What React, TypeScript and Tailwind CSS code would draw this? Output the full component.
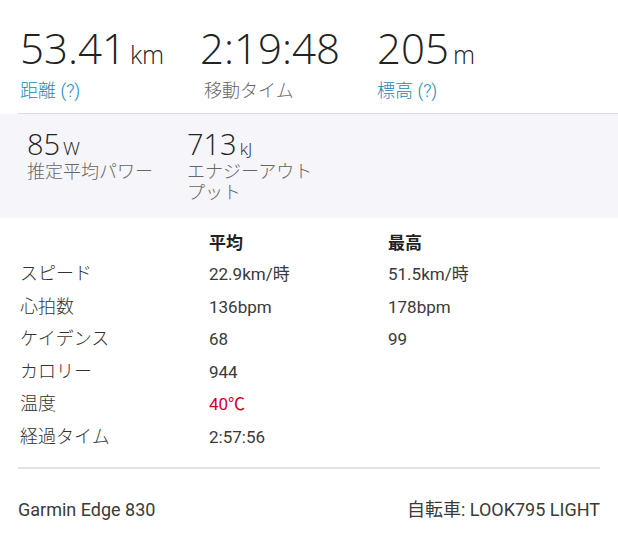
const FONT = { fontFamily: 'Roboto, "Noto Sans CJK JP", sans-serif' }
const NUM = { fontFamily: '"Open Sans", Roboto, sans-serif' }

const TOP = [
  { value: '53.41', unit: 'km', label: '距離 (?)', link: true },
  { value: '2:19:48', unit: '', label: '移動タイム', link: false },
  { value: '205', unit: 'm', label: '標高 (?)', link: true },
]

const ROWS = [
  { label: 'スピード', avg: '22.9km/時', max: '51.5km/時' },
  { label: '心拍数', avg: '136bpm', max: '178bpm' },
  { label: 'ケイデンス', avg: '68', max: '99' },
  { label: 'カロリー', avg: '944', max: '' },
  { label: '温度', avg: '40℃', max: '', hot: true },
  { label: '経過タイム', avg: '2:57:56', max: '' },
]

export default function App() {
  return (
    <div className="w-[618px] h-[536px] bg-white text-[#333]" style={FONT}>
      {/* main stats */}
      <div className="ml-[18px] flex border-b border-[#dcdce4] pt-[27px] pb-[9px]">
        {TOP.map((s, i) => (
          <div key={s.label} className={i === 0 ? 'w-[182px] pl-[2px]' : i === 1 ? 'w-[177px]' : ''}>
            <div className="flex items-baseline leading-none text-[#222]" style={NUM}>
              <span className="text-[42px] font-light">{s.value}</span>
              {s.unit && <span className="ml-[4px] text-[25px] font-light">{s.unit}</span>}
            </div>
            <div className={`mt-[8px] text-[18px] font-light ${s.link ? 'text-[#1b87b5]' : 'text-[#666]'} ${i === 1 ? 'pl-[4px]' : ''}`}>
              {s.label}
            </div>
          </div>
        ))}
      </div>

      {/* secondary stats */}
      <div className="flex h-[104px] bg-[#f6f6fa] pl-[27px] pt-[15px]">
        <div className="w-[160px]">
          <div className="flex items-baseline leading-none text-[#222]" style={NUM}>
            <span className="text-[29px] font-light">85</span>
            <span className="ml-[3px] text-[19px] font-light">W</span>
          </div>
          <div className="mt-[3px] text-[18px] font-light leading-[21px] text-[#666]">推定平均パワー</div>
        </div>
        <div className="w-[132px]">
          <div className="flex items-baseline leading-none text-[#222]" style={NUM}>
            <span className="text-[29px] font-light">713</span>
            <span className="ml-[3px] text-[17px] font-light">kJ</span>
          </div>
          <div className="mt-[3px] text-[18px] font-light leading-[21px] text-[#666]">エナジーアウトプット</div>
        </div>
      </div>

      {/* table */}
      <div className="mx-[18px] border-b-2 border-[#e2e2e6] pt-[12px] pb-[13px]">
        <div className="grid grid-cols-[189px_179px_1fr] pl-[2px] text-[17px] font-bold leading-[26px] text-[#222]">
          <span />
          <span>平均</span>
          <span>最高</span>
        </div>
        <div className="pt-[2px]">
          {ROWS.map((r) => (
            <div key={r.label} className="grid grid-cols-[189px_179px_1fr] pl-[2px] text-[17px] leading-[32.6px] text-[#3a3a3a]">
              <span className="text-[18px] font-light text-[#333]">{r.label}</span>
              <span className={r.hot ? 'text-[#d0021b]' : ''}>{r.avg}</span>
              <span>{r.max}</span>
            </div>
          ))}
        </div>
      </div>

      {/* footer */}
      <div className="flex justify-between px-[18px] pt-[27px] text-[18px] text-[#3a3a3a]">
        <span>Garmin Edge 830</span>
        <span>自転車: LOOK795 LIGHT</span>
      </div>
    </div>
  )
}
